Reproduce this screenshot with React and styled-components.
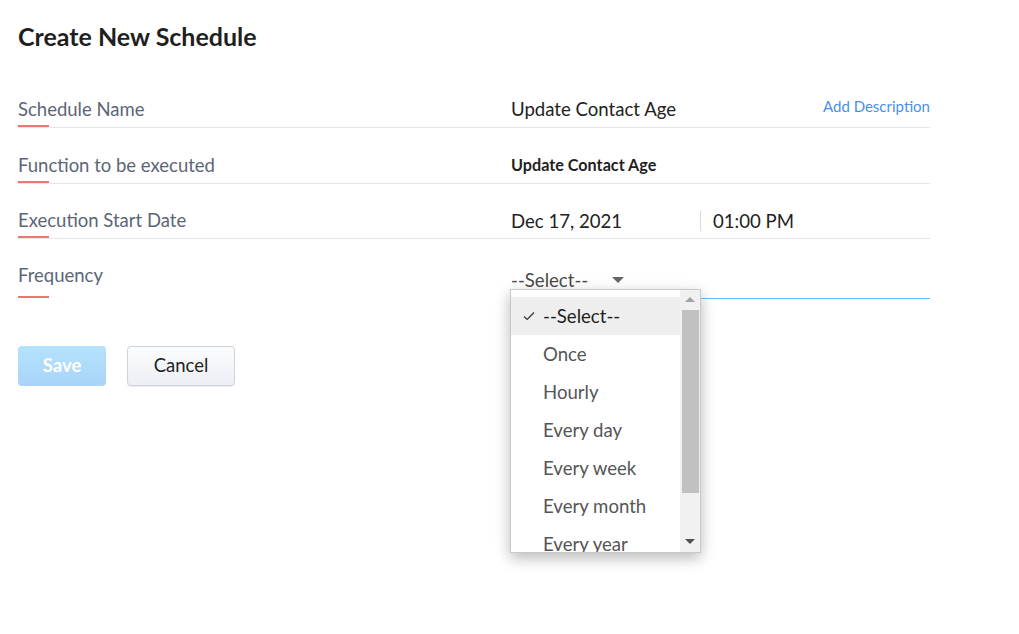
import React from 'react'
import styled, { createGlobalStyle } from 'styled-components'

const GlobalStyle = createGlobalStyle`
  html, body {
    margin: 0;
    padding: 0;
    background: #fff;
    font-family: Lato, "Open Sans", "Liberation Sans", sans-serif;
  }
`

const Page = styled.div`
  padding: 21px 18px 0;
  width: 912px;
  min-height: 634px;
  box-sizing: content-box;
`

const Title = styled.h1`
  margin: 0;
  font-size: 25px;
  line-height: 30px;
  font-weight: 700;
  color: #1f1f1f;
`

const Form = styled.div`
  margin-top: 21px;
  display: flex;
  flex-direction: column;
`

const Row = styled.div`
  display: flex;
  height: ${p => p.h}px;
  box-sizing: border-box;
`

const Label = styled.div`
  position: relative;
  width: 493px;
  flex: none;
  display: flex;
  align-items: flex-end;
  box-sizing: border-box;
  padding-bottom: ${p => p.pb}px;
  font-size: 18.5px;
  line-height: 22px;
  color: #5c6577;
  border-bottom: 1px solid ${p => (p.noLine ? 'transparent' : '#e6e6e6')};
  &::after {
    content: '';
    position: absolute;
    left: 0;
    bottom: 0;
    width: 31px;
    height: 2px;
    background: #f07470;
  }
`

const Value = styled.div`
  position: relative;
  flex: 1;
  display: flex;
  align-items: flex-end;
  box-sizing: border-box;
  padding-bottom: ${p => p.pb}px;
  font-size: 18.6px;
  line-height: 22px;
  color: #222;
  border-bottom: 1px solid ${p => (p.focus ? '#5ec4ef' : '#e6e6e6')};
`

const Spread = styled.div`
  flex: 1;
  display: flex;
  justify-content: space-between;
  align-items: flex-end;
`

const AddLink = styled.a`
  font-size: 15px;
  line-height: 18px;
  margin-bottom: 5px;
  color: #4a8fe8;
  cursor: pointer;
`

const FuncName = styled.span`
  font-size: 16.2px;
  font-weight: 700;
  color: #1f1f1f;
`

const DatePart = styled.span`
  width: 189px;
`

const TimePart = styled.span`
  padding-left: 12px;
  border-left: 1px solid #d9d9d9;
  border-radius: 3px 0 0 3px;
`

const SelectBox = styled.div`
  display: flex;
  align-items: center;
  color: #4a4a4a;
`

const Caret = styled.span`
  margin-left: 24px;
  width: 0;
  height: 0;
  border-left: 6px solid transparent;
  border-right: 6px solid transparent;
  border-top: 6px solid #666;
`

const Dropdown = styled.div`
  position: absolute;
  left: -1px;
  top: 50px;
  width: 191px;
  height: 264px;
  box-sizing: border-box;
  border: 1px solid #c9c9c9;
  background: #fff;
  box-shadow: 0 5px 14px rgba(0, 0, 0, 0.28);
  display: flex;
  overflow: hidden;
  z-index: 5;
`

const List = styled.div`
  flex: 1;
  padding-top: 7px;
  overflow: hidden;
`

const Item = styled.div`
  position: relative;
  height: 38px;
  display: flex;
  align-items: center;
  padding-left: 32px;
  font-size: 18.6px;
  color: ${p => (p.selected ? '#1f1f1f' : '#555')};
  background: ${p => (p.selected ? '#eeeeee' : 'transparent')};
`

const Check = styled.svg`
  position: absolute;
  left: 12px;
  top: 14px;
`

const Scrollbar = styled.div`
  width: 20px;
  flex: none;
  background: #f1f1f1;
  display: flex;
  flex-direction: column;
  align-items: center;
`

const Arrow = styled.span`
  width: 0;
  height: 0;
  border-left: 5px solid transparent;
  border-right: 5px solid transparent;
  ${p => (p.up
    ? `border-bottom: 5px solid #a3a3a3; margin: 7px 0 8px;`
    : `border-top: 5px solid #505050; margin: auto 0 8px;`)}
`

const Thumb = styled.div`
  width: 17px;
  height: 183px;
  background: #c1c1c1;
`

const Buttons = styled.div`
  display: flex;
  gap: 21px;
  margin-top: 47px;
`

const Button = styled.button`
  height: 40px;
  width: ${p => p.w}px;
  padding: 0 0 3px;
  border-radius: 4px;
  font-family: inherit;
  font-size: 18.5px;
  cursor: pointer;
  ${p => (p.primary
    ? `border: none; color: #fff; font-weight: 700;
       background: linear-gradient(#b4e3fc, #a9d3f9);`
    : `border: 1px solid #cfd3df; color: #1f1f1f;
       background: linear-gradient(#fbfcfd, #eceff5);
       box-shadow: 0 1px 1px rgba(0, 0, 0, 0.08);`)}
`

const options = ['--Select--', 'Once', 'Hourly', 'Every day', 'Every week', 'Every month', 'Every year']

function App() {
  return (
    <Page>
      <GlobalStyle />
      <Title>Create New Schedule</Title>
      <Form>
        <Row h={56}>
          <Label pb={7}>Schedule Name</Label>
          <Value pb={7}>
            <Spread>
              <span>Update Contact Age</span>
              <AddLink>Add Description</AddLink>
            </Spread>
          </Value>
        </Row>
        <Row h={56}>
          <Label pb={7}>Function to be executed</Label>
          <Value pb={7}>
            <FuncName>Update Contact Age</FuncName>
          </Value>
        </Row>
        <Row h={55}>
          <Label pb={7}>Execution Start Date</Label>
          <Value pb={6}>
            <DatePart>Dec 17, 2021</DatePart>
            <TimePart>01:00 PM</TimePart>
          </Value>
        </Row>
        <Row h={60}>
          <Label pb={12} noLine>Frequency</Label>
          <Value pb={7} focus>
            <SelectBox>
              --Select--
              <Caret />
            </SelectBox>
            <Dropdown>
              <List>
                {options.map((o, i) => (
                  <Item key={o} selected={i === 0}>
                    {i === 0 && (
                      <Check width="12" height="10" viewBox="0 0 12 10">
                        <path d="M1 5.5 L4.2 8.5 L11 1.5" fill="none" stroke="#333" strokeWidth="1.2" />
                      </Check>
                    )}
                    {o}
                  </Item>
                ))}
              </List>
              <Scrollbar>
                <Arrow up />
                <Thumb />
                <Arrow />
              </Scrollbar>
            </Dropdown>
          </Value>
        </Row>
      </Form>
      <Buttons>
        <Button primary w={88}>Save</Button>
        <Button w={108}>Cancel</Button>
      </Buttons>
    </Page>
  )
}

export default App
